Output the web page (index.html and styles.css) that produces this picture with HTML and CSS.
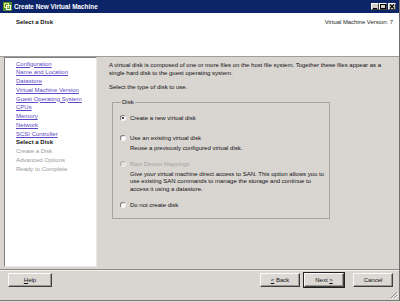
FILE: index.html
```html
<!DOCTYPE html>
<html>
<head>
<meta charset="utf-8">
<link rel="stylesheet" href="styles.css">
</head>
<body>
<div class="window">
  <div class="titlebar">
    <span class="appicon">
      <svg width="9" height="9" viewBox="0 0 9 9">
        <rect x="0" y="0" width="9" height="9" fill="#4f8f2a"/>
        <rect x="1.5" y="1.5" width="4" height="4" fill="none" stroke="#f2e27a" stroke-width="1"/>
        <rect x="3.5" y="3.5" width="4" height="4" fill="none" stroke="#ffffff" stroke-width="1"/>
      </svg>
    </span>
    <span class="title">Create New Virtual Machine</span>
    <span class="controls">
      <span class="ctl"><svg width="8" height="7" viewBox="0 0 8 7"><rect x="2" y="5" width="4" height="1" fill="#000"/></svg></span>
      <span class="ctl"><svg width="8" height="7" viewBox="0 0 8 7"><rect x="1.5" y="1.5" width="5" height="4" fill="none" stroke="#000" stroke-width="1"/><rect x="1" y="1" width="6" height="1" fill="#000"/></svg></span>
      <span class="ctl ctl-close"><svg width="8" height="7" viewBox="0 0 8 7"><path d="M2 1.5 L6 5.5 M6 1.5 L2 5.5" stroke="#000" stroke-width="1.2"/></svg></span>
    </span>
  </div>
  <div class="header">
    <div class="h-title">Select a Disk</div>
    <div class="h-version">Virtual Machine Version: 7</div>
  </div>
  <div class="main">
    <nav class="steps">
      <a class="step">Configuration</a>
      <a class="step">Name and Location</a>
      <a class="step">Datastore</a>
      <a class="step">Virtual Machine Version</a>
      <a class="step">Guest Operating System</a>
      <a class="step">CPUs</a>
      <a class="step">Memory</a>
      <a class="step">Network</a>
      <a class="step">SCSI Controller</a>
      <span class="step current">Select a Disk</span>
      <span class="step future">Create a Disk</span>
      <span class="step future">Advanced Options</span>
      <span class="step future">Ready to Complete</span>
    </nav>
    <div class="content">
      <p class="intro">A virtual disk is composed of one or more files on the host file system. Together these files appear as a single hard disk to the guest operating system.</p>
      <p class="prompt">Select the type of disk to use.</p>
      <fieldset class="group">
        <legend>Disk</legend>
        <div class="option opt-first"><span class="radio checked"></span>Create a new virtual disk</div>
        <div class="option opt-gap"><span class="radio"></span>Use an existing virtual disk</div>
        <div class="desc">Reuse a previously configured virtual disk.</div>
        <div class="option opt-gap2 disabled"><span class="radio"></span>Raw Device Mappings</div>
        <div class="desc">Give your virtual machine direct access to SAN. This option allows you to use existing SAN commands to manage the storage and continue to access it using a datastore.</div>
        <div class="option opt-gap2"><span class="radio"></span>Do not create disk</div>
      </fieldset>
    </div>
  </div>
  <div class="footer">
    <button class="btn"><u>H</u>elp</button>
    <span class="spacer"></span>
    <button class="btn btn-back"><u>&lt;</u> Back</button>
    <button class="btn btn-default">Next <u>&gt;</u></button>
    <button class="btn btn-cancel">Cancel</button>
    <span class="grip">
      <svg width="8" height="8" viewBox="0 0 8 8">
        <path d="M7 1 L1 7 M7 4 L4 7" stroke="#8a8a8a" stroke-width="1"/>
        <path d="M7.9 1.9 L1.9 7.9 M7.9 4.9 L4.9 7.9" stroke="#ffffff" stroke-width="0.8"/>
      </svg>
    </span>
  </div>
</div>
</body>
</html>
```

FILE: styles.css
```css
html, body {
  margin: 0;
  padding: 0;
}
body {
  width: 400px;
  height: 302px;
  overflow: hidden;
  background: #dedad6;
  font-family: "Liberation Sans", Arial, sans-serif;
  font-size: 6px;
  color: #111;
}
.window {
  position: relative;
  width: 399px;
  height: 300px;
  display: flex;
  flex-direction: column;
  background: #d9d5d1;
  border-right: 1px solid #6e6e6e;
  border-bottom: 1px solid #7a7a7a;
}
.titlebar {
  height: 13px;
  flex: none;
  display: flex;
  align-items: center;
  background: #0c2468;
  color: #fff;
  padding: 0 3px;
}
.appicon {
  display: flex;
  width: 9px;
  height: 9px;
  margin-right: 2px;
}
.title {
  font-weight: bold;
  font-size: 6.4px;
  flex: 1;
}
.controls {
  display: flex;
}
.ctl {
  display: flex;
  width: 8px;
  height: 7px;
  background: #d4d0c8;
  border-top: 1px solid #fff;
  border-left: 1px solid #fff;
  border-right: 1px solid #404040;
  border-bottom: 1px solid #404040;
  box-sizing: border-box;
}
.ctl svg { display: block; margin: -1px; }
.ctl-close { margin-left: 1px; }
.header {
  height: 44px;
  flex: none;
  background: #ffffff;
  border-bottom: 1px solid #a09c98;
  display: flex;
  justify-content: space-between;
  align-items: flex-start;
  padding: 5px 6px 0 16px;
  box-sizing: border-box;
}
.h-title {
  font-weight: bold;
  font-size: 6px;
  line-height: 8px;
}
.h-version {
  font-size: 5.9px;
  line-height: 8px;
  color: #222;
}
.main {
  flex: none;
  height: 212px;
  display: flex;
}
.steps {
  width: 93px;
  height: 210px;
  margin-left: 4px;
  box-sizing: border-box;
  background: #fff;
  border-top: 1px solid #808080;
  border-left: 1px solid #808080;
  border-right: 1px solid #e8e8e8;
  border-bottom: 1px solid #e8e8e8;
  padding: 1.5px 0 0 11px;
  display: flex;
  flex-direction: column;
}
.step {
  display: block;
  line-height: 8.75px;
  font-size: 6px;
  color: #5a48c6;
  text-decoration: underline;
  white-space: nowrap;
}
.step.current {
  color: #111;
  font-weight: bold;
  text-decoration: none;
}
.step.future {
  color: #9a9a9a;
  text-decoration: none;
}
.content {
  flex: 1;
  padding: 4px 8px 0 12px;
  font-size: 6px;
}
.intro {
  margin: 0;
  width: 274px;
  line-height: 8px;
}
.prompt {
  margin: 6px 0 0 0;
  line-height: 8px;
}
.group {
  margin: 6px 0 0 3px;
  width: 218px;
  box-sizing: border-box;
  border: 1px solid #a8a4a0;
  border-radius: 0;
  padding: 0 0 9px 7px;
}
.group legend {
  padding: 0 1px;
  margin-left: 1px;
  line-height: 10px;
}
.option {
  display: flex;
  align-items: center;
  line-height: 8px;
  height: 8px;
}
.opt-first { margin-top: 7px; }
.opt-gap { margin-top: 12px; }
.opt-gap2 { margin-top: 8px; }
.option.disabled { color: #a6a6a6; }
.radio {
  display: inline-block;
  width: 6px;
  height: 6px;
  box-sizing: border-box;
  border-radius: 50%;
  background: #fff;
  border-top: 1px solid #7a7a7a;
  border-left: 1px solid #7a7a7a;
  border-right: 1px solid #f4f4f4;
  border-bottom: 1px solid #f4f4f4;
  margin-right: 4px;
  position: relative;
}
.option.disabled .radio { background: #e4e0dc; border-color: #b0aca8 #eee #eee #b0aca8; }
.radio.checked::after {
  content: "";
  position: absolute;
  left: 1px;
  top: 1px;
  width: 2px;
  height: 2px;
  border-radius: 50%;
  background: #111;
}
.desc {
  margin-top: 3px;
  padding-left: 10px;
  line-height: 7.2px;
  width: 196px;
}
.footer {
  flex: 1;
  display: flex;
  align-items: flex-start;
  border-top: 1px solid #8c8884;
  box-shadow: inset 0 1px 0 #f2f0ee;
  padding: 3px 6px 0 8px;
  gap: 4px;
}
.spacer { flex: 1; }
.btn {
  width: 44px;
  height: 14px;
  padding: 0;
  font-family: "Liberation Sans", Arial, sans-serif;
  font-size: 6px;
  color: #111;
  background: #dcd8d4;
  border-top: 1px solid #fafafa;
  border-left: 1px solid #fafafa;
  border-right: 1px solid #404040;
  border-bottom: 1px solid #404040;
  box-shadow: inset -1px -1px 0 #9a9692;
  border-radius: 0;
}
.btn-back { width: 40px; }
.btn-default {
  width: 40px;
  outline: 1px solid #222;
}
.btn-cancel { width: 40px; margin-left: 5px; }
.btn u { text-decoration: underline; }
.grip {
  position: absolute;
  right: 1px;
  bottom: 1px;
  display: flex;
}
```
